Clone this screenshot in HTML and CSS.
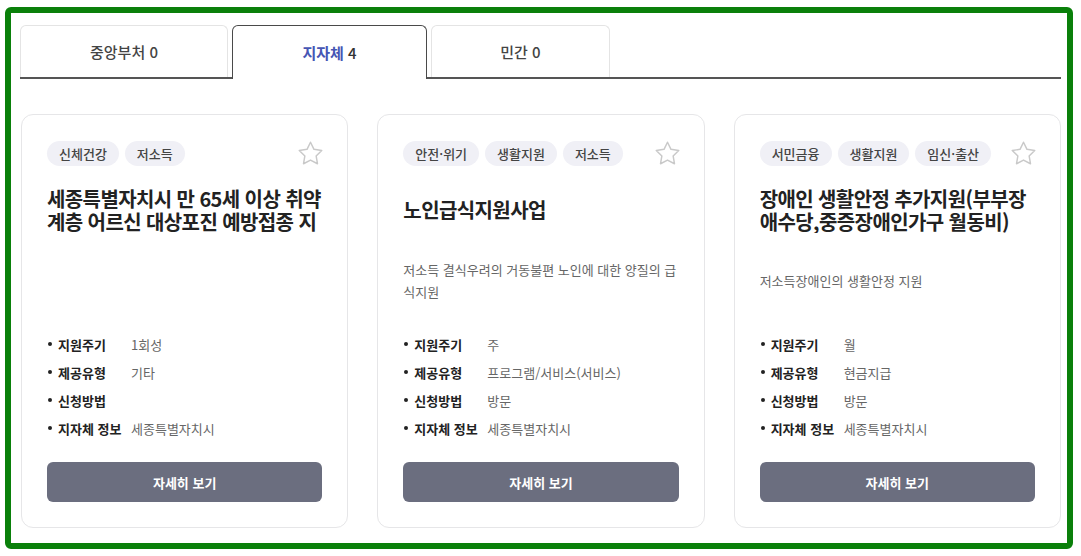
FILE: index.html
```html
<!DOCTYPE html>
<html lang="ko">
<head>
<meta charset="utf-8">
<title>지원사업</title>
<link rel="stylesheet" href="styles.css">
</head>
<body>
<div class="frame">
  <div class="tabs">
    <div class="tab tab-a">중앙부처 0</div>
    <div class="tab tab-b active"><span class="tab-hl">지자체</span> 4</div>
    <div class="tab tab-c">민간 0</div>
  </div>

  <div class="cards">
    <div class="card">
      <div class="card-top">
        <div class="tags"><span class="tag">신체건강</span><span class="tag">저소득</span></div>
        <svg class="star" viewBox="0 0 24 24"><path d="M12 2l3.1 6.3 6.9 1-5 4.9 1.2 6.9L12 17.8l-6.2 3.3 1.2-6.9-5-4.9 6.9-1z"/></svg>
      </div>
      <div class="title-box"><div class="title">세종특별자치시 만 65세 이상 취약계층 어르신 대상포진 예방접종 지원사업</div></div>
      <div class="desc-box"><div class="desc"></div></div>
      <ul class="info">
        <li><span class="lbl">지원주기</span><span class="val">1회성</span></li>
        <li><span class="lbl">제공유형</span><span class="val">기타</span></li>
        <li><span class="lbl">신청방법</span><span class="val"></span></li>
        <li><span class="lbl">지자체 정보</span><span class="val">세종특별자치시</span></li>
      </ul>
      <button class="btn">자세히 보기</button>
    </div>

    <div class="card">
      <div class="card-top">
        <div class="tags"><span class="tag">안전·위기</span><span class="tag">생활지원</span><span class="tag">저소득</span></div>
        <svg class="star" viewBox="0 0 24 24"><path d="M12 2l3.1 6.3 6.9 1-5 4.9 1.2 6.9L12 17.8l-6.2 3.3 1.2-6.9-5-4.9 6.9-1z"/></svg>
      </div>
      <div class="title-box"><div class="title">노인급식지원사업</div></div>
      <div class="desc-box"><div class="desc">저소득 결식우려의 거동불편 노인에 대한 양질의 급식지원</div></div>
      <ul class="info">
        <li><span class="lbl">지원주기</span><span class="val">주</span></li>
        <li><span class="lbl">제공유형</span><span class="val">프로그램/서비스(서비스)</span></li>
        <li><span class="lbl">신청방법</span><span class="val">방문</span></li>
        <li><span class="lbl">지자체 정보</span><span class="val">세종특별자치시</span></li>
      </ul>
      <button class="btn">자세히 보기</button>
    </div>

    <div class="card">
      <div class="card-top">
        <div class="tags"><span class="tag">서민금융</span><span class="tag">생활지원</span><span class="tag">임신·출산</span></div>
        <svg class="star" viewBox="0 0 24 24"><path d="M12 2l3.1 6.3 6.9 1-5 4.9 1.2 6.9L12 17.8l-6.2 3.3 1.2-6.9-5-4.9 6.9-1z"/></svg>
      </div>
      <div class="title-box"><div class="title">장애인 생활안정 추가지원(부부장애수당,중증장애인가구 월동비)</div></div>
      <div class="desc-box"><div class="desc">저소득장애인의 생활안정 지원</div></div>
      <ul class="info">
        <li><span class="lbl">지원주기</span><span class="val">월</span></li>
        <li><span class="lbl">제공유형</span><span class="val">현금지급</span></li>
        <li><span class="lbl">신청방법</span><span class="val">방문</span></li>
        <li><span class="lbl">지자체 정보</span><span class="val">세종특별자치시</span></li>
      </ul>
      <button class="btn">자세히 보기</button>
    </div>
  </div>
</div>
</body>
</html>
```

FILE: styles.css
```css
* { box-sizing: border-box; }

html, body {
  margin: 0;
  padding: 0;
  background: #ffffff;
}

body {
  font-family: "Noto Sans CJK KR", "Noto Sans", sans-serif;
  color: #222;
}

.frame {
  width: 1068px;
  height: 542px;
  margin: 7px 0 0 5px;
  border: 6px solid #0a800a;
  border-radius: 6px;
  padding: 12px 6px 15px 9px;
  background: #fff;
}

/* Tabs */
.tabs {
  display: flex;
  gap: 4px;
  height: 54px;
  border-bottom: 2px solid #555;
}

.tab {
  height: 52px;
  display: flex;
  align-items: center;
  justify-content: center;
  border: 1px solid #e4e4e4;
  border-bottom: none;
  border-radius: 6px 6px 0 0;
  background: #fff;
  font-size: 15px;
  font-weight: 500;
  color: #444;
}

.tab-a { width: 208px; }
.tab-b { width: 195px; }
.tab-c { width: 179px; }

.tab.active {
  height: 54px;
  border-color: #4a4a4a;
  position: relative;
  z-index: 1;
  color: #333;
}

.tab-hl {
  color: #4656b4;
  font-weight: 700;
  margin-right: 4px;
}

/* Cards */
.cards {
  display: grid;
  grid-template-columns: repeat(3, 1fr);
  column-gap: 29px;
  width: 1040px;
  margin: 35px 0 0 1px;
}

.card {
  height: 414px;
  border: 1px solid #e6e6e8;
  border-radius: 12px;
  padding: 26px 25px 25px 25px;
  display: flex;
  flex-direction: column;
}

.card-top {
  display: flex;
  justify-content: space-between;
  align-items: center;
  height: 25px;
}

.tags {
  display: flex;
  gap: 6px;
}

.tag {
  height: 25px;
  padding: 0 12px;
  border-radius: 13px;
  background: #f0f0f6;
  font-size: 13px;
  font-weight: 500;
  color: #444;
  display: flex;
  align-items: center;
  white-space: nowrap;
}

.star {
  width: 27px;
  height: 27px;
  margin-right: -2px;
  fill: none;
  stroke: #c9c9c9;
  stroke-width: 1.3;
  stroke-linejoin: round;
}

.title-box {
  margin-top: 22px;
  height: 45px;
  display: flex;
  align-items: center;
}

.title {
  font-size: 20px;
  line-height: 22.5px;
  font-weight: 600;
  color: #222;
  max-height: 45px;
  overflow: hidden;
  letter-spacing: -0.6px;
}

.desc-box {
  margin-top: 21px;
  height: 54px;
  display: flex;
  align-items: center;
}

.desc {
  font-size: 13px;
  line-height: 22px;
  color: #666;
}

.info {
  list-style: none;
  margin: 22px 0 0 0;
  padding: 0;
}

.info li {
  height: 28px;
  display: flex;
  align-items: center;
  font-size: 13px;
}

.lbl {
  width: 84px;
  flex: none;
  display: flex;
  align-items: center;
  font-weight: 700;
  color: #222;
}

.lbl::before {
  content: "";
  width: 4px;
  height: 4px;
  border-radius: 50%;
  background: #222;
  margin: 0 6px 0 1px;
}

.val {
  color: #666;
}

.btn {
  margin-top: 20px;
  height: 40px;
  width: 100%;
  border: none;
  border-radius: 6px;
  background: #6b6e7f;
  color: #fff;
  font-family: inherit;
  font-size: 13px;
  font-weight: 700;
}
```
